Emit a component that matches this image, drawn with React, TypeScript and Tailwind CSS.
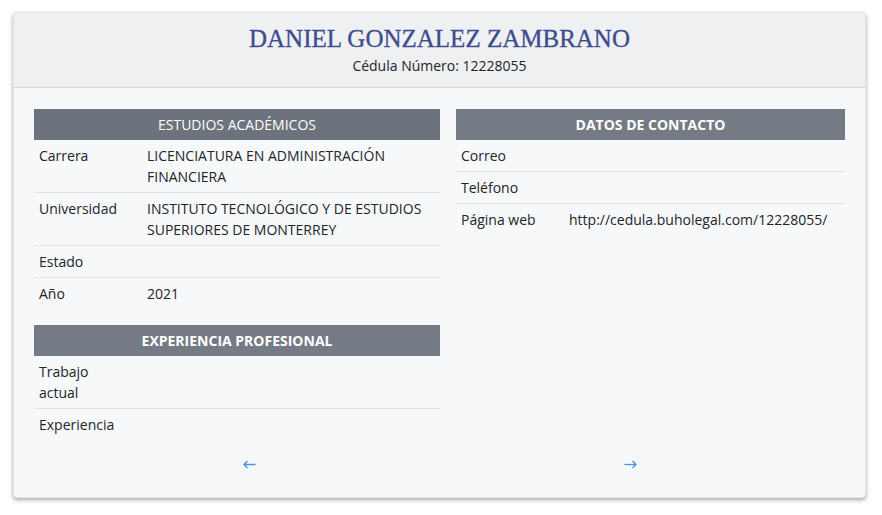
const font = { fontFamily: '"Open Sans", "Liberation Sans", sans-serif' };

function Row({ label, value, labelW, last }: { label: string; value?: string; labelW: string; last?: boolean }) {
    return (
        <div className={`flex text-[14px] leading-[21px] text-[#212529] px-[5px] py-[5px] ${last ? "" : "border-b border-[#dee2e6]"}`}>
            <div className={`${labelW} shrink-0`}>{label}</div>
            <div className="flex-1">{value}</div>
        </div>
    )
}

function Arrow({ dir }: { dir: "left" | "right" }) {
    return (
        <svg width="13" height="9" viewBox="0 0 13 9" fill="none" stroke="#4a90e2" strokeWidth="1.3">
            {dir === "left" ? (
                <>
                    <path d="M1 4.5H12.5" />
                    <path d="M4.5 1L1 4.5L4.5 8" />
                </>
            ) : (
                <>
                    <path d="M0.5 4.5H12" />
                    <path d="M8.5 1L12 4.5L8.5 8" />
                </>
            )}
        </svg>
    )
}

export default function App() {
    return (
        <div className="w-[882px] h-[515px] bg-white pt-[12px] pl-[13px]" style={font}>
            <div className="w-[853px] h-[486px] rounded-[4px] bg-[#f7f8fa] shadow-[0_2px_4px_rgba(0,0,0,0.35)] border border-[#e3e4e6] overflow-hidden">
                <div className="h-[75px] bg-[#eff0f2] border-b border-[#d9dadc] flex flex-col items-center pt-[10px]">
                    <h1 className="text-[25px] leading-[32px] text-[#3d4b8f]" style={{ fontFamily: '"Liberation Serif", serif', WebkitTextStroke: '0.3px #3d4b8f' }}>
                        DANIEL GONZALEZ ZAMBRANO
                    </h1>
                    <p className="text-[14px] leading-[20px] text-[#212529] mt-[1px]">Cédula Número: 12228055</p>
                </div>
                <div className="flex gap-[16px] pl-[20px] pt-[21px]">
                    <div className="w-[406px]">
                        <div className="h-[31px] bg-[#6c737d] text-white text-[14px] flex items-center justify-center">ESTUDIOS ACADÉMICOS</div>
                        <Row label="Carrera" value="LICENCIATURA EN ADMINISTRACIÓN FINANCIERA" labelW="w-[108px]" />
                        <Row label="Universidad" value="INSTITUTO TECNOLÓGICO Y DE ESTUDIOS SUPERIORES DE MONTERREY" labelW="w-[108px]" />
                        <Row label="Estado" labelW="w-[108px]" />
                        <Row label="Año" value="2021" labelW="w-[108px]" last />
                        <div className="h-[31px] mt-[16px] bg-[#757b84] text-white text-[14px] font-bold flex items-center justify-center">EXPERIENCIA PROFESIONAL</div>
                        <Row label="Trabajo actual" labelW="w-[60px]" />
                        <Row label="Experiencia" labelW="w-[108px]" last />
                        <div className="flex justify-center pl-[24px] mt-[20px]">
                            <Arrow dir="left" />
                        </div>
                    </div>
                    <div className="w-[389px]">
                        <div className="h-[31px] bg-[#757b84] text-white text-[14px] font-bold flex items-center justify-center">DATOS DE CONTACTO</div>
                        <Row label="Correo" labelW="w-[108px]" />
                        <Row label="Teléfono" labelW="w-[108px]" />
                        <Row label="Página web" value="http://cedula.buholegal.com/12228055/" labelW="w-[108px]" last />
                        <div className="flex justify-center pr-[40px] mt-[225px]">
                            <Arrow dir="right" />
                        </div>
                    </div>
                </div>
            </div>
        </div>
    )
}
